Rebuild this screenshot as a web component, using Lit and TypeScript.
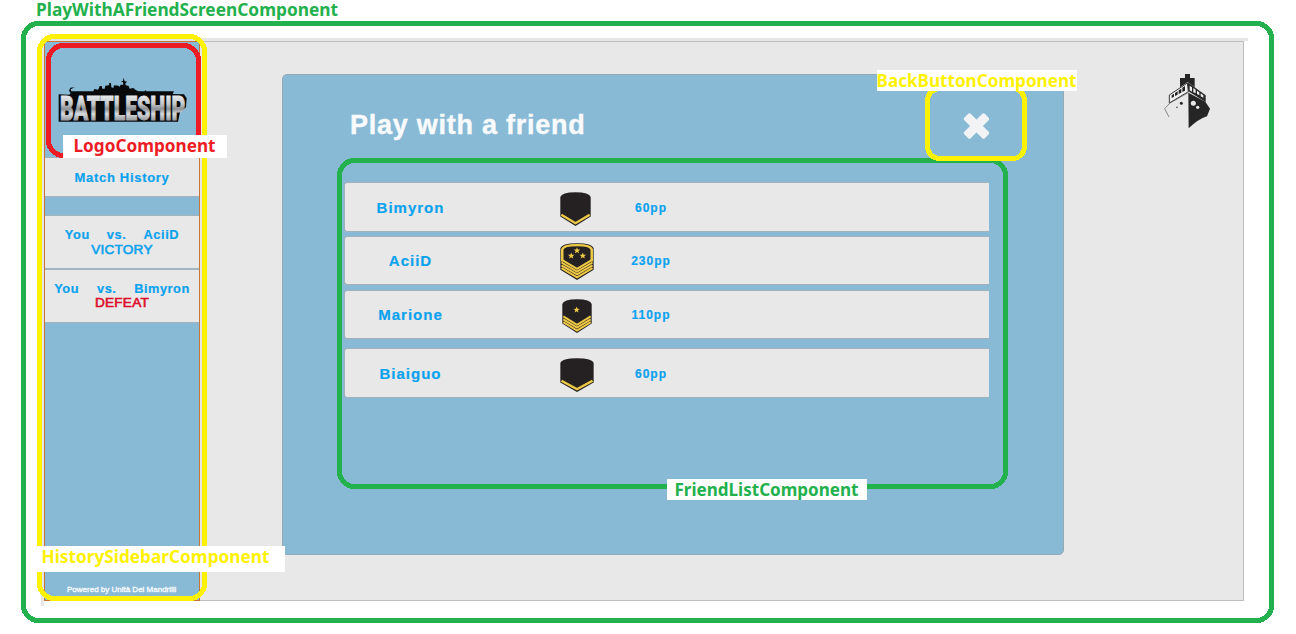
import { LitElement, html, svg, css } from "lit";
import { customElement, property } from "lit/decorators.js";

@customElement("battle-logo")
class BattleLogo extends LitElement {
  static styles = css`
    :host { display: block; width: 138px; height: 47px; }
    svg { display: block; overflow: visible; }
    text { font-family: Roboto, "Liberation Sans", sans-serif; font-weight: 900; }
  `;
  render() {
    return html`<svg width="138" height="47" viewBox="72 51 414 141">
      <defs>
        <linearGradient id="steel" x1="0" y1="106" x2="0" y2="180" gradientUnits="userSpaceOnUse">
          <stop offset="0" stop-color="#e8eaec" />
          <stop offset="0.35" stop-color="#c4c8cb" />
          <stop offset="0.55" stop-color="#8d9195" />
          <stop offset="0.75" stop-color="#d9dcde" />
          <stop offset="1" stop-color="#9a9ea2" />
        </linearGradient>
      </defs>
      <path
        d="M118 104 L122 100 L117 92 L121 83 L134 82 L122 88 L124 94 L190 94 L193 87 L204 89 L207 84 L209 78 L215 78 L217 86 L224 86 L226 77 L237 76 L238 69 L243 69 L244 82 L250 84 L252 76 L266 77 L268 81 L272 74 L280 74 L279 67 L272 64 L279 63 L281 53 L284 64 L292 65 L286 69 L287 76 L296 78 L299 86 L310 84 L318 91 L326 94 L344 94 L346 90 L349 94 L432 94 L428 102 L462 103 L470 115 L468 142 L450 155 L444 185 L86 185 L86 103 Z"
        fill="#07090b"
      />
      <text x="90" y="179" font-size="99" textLength="376" lengthAdjust="spacingAndGlyphs"
        fill="url(#steel)" stroke="url(#steel)" stroke-width="3">BATTLESHIP</text>
    </svg>`;
  }
}

interface Match { rival: string; result: string; lost: boolean }

@customElement("history-sidebar")
class HistorySidebar extends LitElement {
  static styles = css`
    :host {
      box-sizing: border-box; width: 156px; height: 560px; display: flex; flex-direction: column;
      background: #88bad6; border: 1px solid #c87433; color: #0ba2ee;
      font: bold 13px/15px "Liberation Sans", Arial, sans-serif;
    }
    .logo { height: 115px; box-sizing: border-box; padding: 35px 0 0 9px; }
    .head {
      height: 40px; box-sizing: border-box; border: solid #a3b4be; border-width: 1px 0;
      background: #e8e8e8; text-align: center; line-height: 40px; letter-spacing: 0.7px;
      -webkit-text-stroke: 0.2px currentColor;
    }
    .list { margin-top: 18px; border-top: 1px solid #a3b4be; }
    .match {
      height: 54px; box-sizing: border-box; background: #e8e8e8; border-bottom: 1px solid #a3b4be;
      padding-top: 11px; text-align: center; letter-spacing: 0.6px; font-size: 12.8px;
      -webkit-text-stroke: 0.2px currentColor;
    }
    .match:first-child { height: 54px; border-bottom-width: 2px; }
    .match:last-child { height: 53px; }
    .sides { display: flex; justify-content: center; gap: 17px; white-space: nowrap; }
    .wide { gap: 18px; letter-spacing: 0.5px; }
    .result { font-size: 13.6px; font-weight: 400; letter-spacing: 0.2px; line-height: 15px;
      -webkit-text-stroke: 0.6px currentColor; }
    .lost { color: #dc0a28; line-height: 14px; }
    .foot {
      margin-top: auto; padding: 0 0 5px 22px; color: #f4f8fb; white-space: nowrap;
      font-size: 8px; font-weight: 400; line-height: 10px; -webkit-text-stroke: 0.4px currentColor;
    }
  `;
  matches: Match[] = [
    { rival: "AciiD", result: "VICTORY", lost: false },
    { rival: "Bimyron", result: "DEFEAT", lost: true },
  ];
  render() {
    return html`
      <div class="logo"><battle-logo></battle-logo></div>
      <div class="head">Match History</div>
      <div class="list">
        ${this.matches.map((m) => html`<div class="match">
          <div class="sides ${m.lost ? "wide" : ""}"><span>You</span><span>vs.</span><span>${m.rival}</span></div>
          <div class="result ${m.lost ? "lost" : ""}">${m.result}</div>
        </div>`)}
      </div>
      <div class="foot">Powered by Unità Dei Mandrilli</div>
    `;
  }
}

@customElement("rank-badge")
class RankBadge extends LitElement {
  @property() rank = "private";
  @property({ type: Number }) wide = 30;
  @property({ type: Number }) tall = 34;
  static styles = css`
    :host { display: block; }
    svg { display: block; }
  `;
  star(x: number, y: number, r: number) {
    const pts = Array.from({ length: 10 }, (_, i) => {
      const a = (Math.PI * i) / 5 - Math.PI / 2;
      const d = i % 2 ? r * 0.42 : r;
      return `${(x + d * Math.cos(a)).toFixed(2)},${(y + d * Math.sin(a)).toFixed(2)}`;
    });
    return svg`<polygon points=${pts.join(" ")} fill="#f0cc45" />`;
  }
  chevron(y: number, weight = 2) {
    return svg`<path d=${`M1.3 ${y} L15 ${y + 8.4} L28.7 ${y}`} fill="none" stroke="#eec946" stroke-width=${weight} />`;
  }
  render() {
    const body = "M0.3 5 Q1.5 0.3 15 0.2 Q28.5 0.3 29.7 5 V24.5 L15 33.9 L0.3 24.5 Z";
    let marks;
    if (this.rank === "captain") {
      marks = svg`
        <path d="M2 17 V6 Q3 2 15 2 Q27 2 28 6 V17" fill="none" stroke="#eec946" stroke-width="2.2" />
        ${[15.3, 17.9, 20.5, 23.1].map((y) => this.chevron(y, 1.8))}
        ${this.star(15, 7, 3.1)}${this.star(9.9, 11.8, 3.1)}${this.star(20.1, 11.8, 3.1)}`;
    } else if (this.rank === "sergeant") {
      marks = svg`${[17.4, 20.3, 23.2].map((y) => this.chevron(y))}${this.star(14.6, 10.9, 3.3)}`;
    } else {
      marks = this.chevron(22.8, 2.3);
    }
    return html`<svg width=${this.wide} height=${this.tall} viewBox="0 0 30 34" preserveAspectRatio="none">
      <path d=${body} fill="#252122" />${marks}
    </svg>`;
  }
}

interface Friend { name: string; rank: string; points: string; w: number; h: number; shift: string }

@customElement("friend-list")
class FriendList extends LitElement {
  static styles = css`
    :host { display: flex; flex-direction: column; gap: 5px; }
    .row {
      box-sizing: border-box; width: 645px; height: 49px; display: grid;
      grid-template-columns: 131px 73px 55px 94px; align-items: center; justify-items: center;
      background: #e8e8e8; border: 1px solid #a2b0b8; border-right: none; border-radius: 3px 0 0 3px;
      color: #0ba2ee; font: bold 15px/18px "Liberation Sans", Arial, sans-serif; letter-spacing: 1px;
      -webkit-text-stroke: 0.2px currentColor;
    }
    .row:first-child { height: 50px; margin-bottom: -1px; padding-top: 1px; }
    .row:last-child { height: 50px; margin-top: 4px; padding-top: 1px; }
    .badge { grid-column: 3; padding-top: 2px; }
    .early { padding-right: 3px; }
    .points { font-size: 12px; }
  `;
  friends: Friend[] = [
    { name: "Bimyron", rank: "private", points: "60pp", w: 31, h: 34, shift: "early" },
    { name: "AciiD", rank: "captain", points: "230pp", w: 34, h: 37, shift: "" },
    { name: "Marione", rank: "sergeant", points: "110pp", w: 30, h: 34, shift: "" },
    { name: "Biaiguo", rank: "private", points: "60pp", w: 34, h: 34, shift: "" },
  ];
  render() {
    return this.friends.map((f) => html`<div class="row">
      <span>${f.name}</span>
      <span class="badge ${f.shift}"><rank-badge rank=${f.rank} wide=${f.w} tall=${f.h}></rank-badge></span>
      <span class="points">${f.points}</span>
    </div>`);
  }
}

@customElement("ship-mark")
class ShipMark extends LitElement {
  static styles = css`
    :host { display: block; width: 48px; height: 56px; }
    svg { display: block; }
  `;
  render() {
    return html`<svg width="48" height="56" viewBox="69 219 144 168">
      <path d="M135 222 H150 V234 H164 V262 L143 246 L120 262 V234 H135 Z" fill="#252525" />
      <path d="M142 249 L88 285 V309 L145 275 Z" fill="#f1f1f1" stroke="#3a3a3a" stroke-width="3" />
      <path d="M143 247 L197 286 V306 L145 274 Z" fill="#252525" />
      <path d="M95 286 L102 281 V290 L95 294 Z M105 279 L113 274 V284 L105 288 Z M116 271 L124 266 V278 L116 282 Z M127 263 L135 258 V272 L127 276 Z" fill="#252525" />
      <path d="M149 257 L156 262 V275 L149 271 Z M160 264 L167 269 V280 L160 277 Z M171 272 L178 277 V286 L171 282 Z M182 280 L190 286 V293 L182 289 Z" fill="#ededed" />
      <path d="M145 278 L90 309 L74 326 L87 351" fill="none" stroke="#555" stroke-width="2" />
      <path d="M145 278 L196 305 L210 326 L201 349 Q175 357 146 385 Z" fill="#252525" />
      <circle cx="124" cy="310" r="4.5" fill="#252525" />
      <circle cx="111" cy="322" r="2.8" fill="#666" />
      <circle cx="160" cy="310" r="7.5" fill="#e8e8e8" />
      <circle cx="173" cy="322" r="5" fill="#e8e8e8" />
    </svg>`;
  }
}

@customElement("component-notes")
class ComponentNotes extends LitElement {
  static styles = css`
    :host { display: block; }
    svg { display: block; overflow: visible; }
    .box { fill: none; stroke-width: 5px; shape-rendering: crispEdges; }
    .green { stroke: #22b14c; }
    .yellow { stroke: #fff200; }
    .red { stroke: #ed1c24; }
    text { font: 700 17px "Noto Sans", "Open Sans", sans-serif; }
    .t-green { fill: #22b14c; }
    .t-yellow { fill: #fff200; }
    .t-red { fill: #ed1c24; }
  `;
  render() {
    return html`<svg width="1296" height="634" viewBox="0 0 1296 634">
      <rect class="box green" x="23.5" y="23.5" width="1248" height="597" rx="15" />
      <rect class="box yellow" x="39.5" y="36.5" width="165" height="562" rx="15" />
      <rect class="box red" x="48.5" y="45.5" width="150" height="110" rx="15" />
      <rect class="box green" x="339.5" y="160.5" width="666" height="326" rx="15" />
      <rect class="box yellow" x="927.5" y="88.5" width="97" height="70" rx="12" />
      <rect x="63" y="135" width="164" height="23" fill="#fff" />
      <rect x="37" y="546" width="248" height="26" fill="#fff" />
      <rect x="667" y="479" width="200" height="21" fill="#fff" />
      <rect x="877" y="70" width="200" height="21" fill="#fff" />
      <text class="t-green" x="36" y="16" textLength="302" lengthAdjust="spacingAndGlyphs">PlayWithAFriendScreenComponent</text>
      <text class="t-red" x="73.5" y="152" textLength="142" lengthAdjust="spacingAndGlyphs">LogoComponent</text>
      <text class="t-yellow" x="41.5" y="563" textLength="228" lengthAdjust="spacingAndGlyphs">HistorySidebarComponent</text>
      <text class="t-green" x="674.5" y="496" textLength="184" lengthAdjust="spacingAndGlyphs">FriendListComponent</text>
      <text class="t-yellow" x="876.5" y="87" textLength="200" lengthAdjust="spacingAndGlyphs">BackButtonComponent</text>
    </svg>`;
  }
}

@customElement("app-root")
class AppRoot extends LitElement {
  static styles = css`
    :host { display: block; position: relative; width: 1296px; height: 634px; background: #fff; }
    .page { padding: 38px 0 0 41px; }
    .sheet {
      box-sizing: border-box; width: 1207px; height: 568px;
      border: solid #e6e6e6; border-width: 3px 0 0 3px;
    }
    .frame {
      box-sizing: border-box; width: 1200px; height: 560px; display: flex; align-items: flex-start;
      background: #e8e8e8; box-shadow: inset -1px -1px #bebebe, inset 0 1px #bebebe;
    }
    .panel {
      box-sizing: border-box; width: 782px; height: 481px; margin: 33px 0 0 82px; padding: 30px 74px 0 61px;
      background: #88bad6; border: 1px solid #93a9b5; border-radius: 5px;
    }
    .top { display: flex; justify-content: space-between; align-items: center; height: 40px; padding: 0 0 37px 6px; }
    h1 {
      margin: 0 0 1px; color: #f8fafc; letter-spacing: 0.75px; -webkit-text-stroke: 0.4px currentColor;
      font: bold 27px/32px "Liberation Sans", Arial, sans-serif;
    }
    .close { width: 26px; height: 26px; margin-top: 2px; }
    ship-mark { margin: 32px 0 0 99px; }
    component-notes { position: absolute; inset: 0; }
  `;
  render() {
    return html`
      <div class="page"><div class="sheet"><div class="frame">
        <history-sidebar></history-sidebar>
        <main class="panel">
          <div class="top">
            <h1>Play with a friend</h1>
            <svg class="close" viewBox="-13.5 -13 26 26" fill="#f2f3f4">
              <rect x="-14.5" y="-4.5" width="29" height="9" rx="1.8" transform="rotate(45)" />
              <rect x="-14.5" y="-4.5" width="29" height="9" rx="1.8" transform="rotate(-45)" />
            </svg>
          </div>
          <friend-list></friend-list>
        </main>
        <ship-mark></ship-mark>
      </div></div></div>
      <component-notes></component-notes>
    `;
  }
}
